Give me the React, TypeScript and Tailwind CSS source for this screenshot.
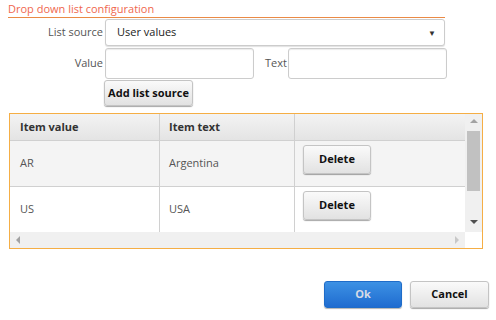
import React from 'react'

// Drop down list configuration dialog
const ROWS = [
  { value: 'AR', text: 'Argentina', bg: 'bg-[#f4f4f4]' },
  { value: 'US', text: 'USA', bg: 'bg-white' },
]

function GrayButton({ children, className = '' }: { children: React.ReactNode; className?: string }) {
  return (
    <button
      className={
        'flex items-center justify-center whitespace-nowrap rounded-[3px] border border-[#c4c4c4] bg-gradient-to-b from-[#fafafa] to-[#e2e2e2] text-[11px] font-bold text-[#111] shadow-[0_1px_1px_rgba(0,0,0,0.35)] ' +
        className
      }
    >
      {children}
    </button>
  )
}

export default function App() {
  return (
    <div className="relative h-[320px] w-[496px] overflow-hidden bg-white font-['Open_Sans',sans-serif]">
      {/* ── タイトル ── */}
      <div className="ml-[8px] h-[18px] w-[437px] border-b border-[#ea8a45] text-[11px] leading-[17px] text-[#f0674e]">
        Drop down list configuration
      </div>

      {/* ── フォーム ── */}
      <div className="flex h-[29px] items-center">
        <span className="w-[104px] pr-[1px] text-right text-[11px] text-[#555]">List source</span>
        <div className="ml-[1px] flex h-[27px] w-[340px] items-center justify-between rounded-[3px] border border-[#ccc] bg-white pl-[11px] pr-[8px] shadow-[0_1px_1px_rgba(0,0,0,0.12)]">
          <span className="text-[11px] text-[#222]">User values</span>
          <span className="text-[8px] leading-none text-[#333]">▼</span>
        </div>
      </div>
      <div className="flex h-[32px] items-center">
        <span className="w-[104px] pr-[1px] text-right text-[11px] text-[#555]">Value</span>
        <div className="ml-[1px] h-[31px] w-[149px] rounded-[3px] border border-[#ccc] bg-white shadow-[inset_0_1px_1px_rgba(0,0,0,0.08)]" />
        <span className="ml-[11px] w-[22px] text-[11px] text-[#555]">Text</span>
        <div className="ml-[1px] h-[31px] w-[159px] rounded-[3px] border border-[#ccc] bg-white shadow-[inset_0_1px_1px_rgba(0,0,0,0.08)]" />
      </div>
      <div className="ml-[104px] mt-[1px]">
        <GrayButton className="h-[26px] w-[89px]">Add list source</GrayButton>
      </div>

      {/* ── テーブル ── */}
      <div className="ml-[9px] mt-[7px] flex h-[136px] w-[474px] flex-col border border-[#f5ae45]">
        <div className="flex h-[118px]">
          <div className="w-[455px] overflow-hidden">
            <div className="flex h-[27px] border-b border-[#d0d0d0] bg-gradient-to-b from-[#f3f3f3] to-[#e4e4e4] text-[11px] font-bold text-[#333]">
              <div className="flex w-[150px] items-center border-r border-[#d0d0d0] pl-[10px]">Item value</div>
              <div className="flex w-[135px] items-center border-r border-[#d0d0d0] pl-[9px]">Item text</div>
              <div className="flex-1" />
            </div>
            {ROWS.map((r) => (
              <div key={r.value} className={'flex h-[46px] border-b border-[#d0d0d0] text-[11px] text-[#555] ' + r.bg}>
                <div className="flex w-[150px] items-center border-r border-[#d0d0d0] pl-[10px]">{r.value}</div>
                <div className="flex w-[135px] items-center border-r border-[#d0d0d0] pl-[9px]">{r.text}</div>
                <div className="flex-1 pl-[8px] pt-[4px]">
                  <GrayButton className="h-[29px] w-[68px]">Delete</GrayButton>
                </div>
              </div>
            ))}
          </div>
          {/* 縦スクロールバー */}
          <div className="relative flex w-[17px] flex-col items-center bg-[#f0f0f0]">
            <span className="mt-[5px] h-0 w-0 border-x-[4px] border-b-[4px] border-x-transparent border-b-[#a3a3a3]" />
            <div className="mt-[8px] h-[60px] w-[13px] bg-[#c1c1c1]" />
            <span className="mt-[29px] h-0 w-0 border-x-[4px] border-t-[4px] border-x-transparent border-t-[#505050]" />
          </div>
        </div>
        {/* 横スクロールバー */}
        <div className="flex h-[16px]">
          <div className="flex w-[455px] items-center justify-between bg-[#f0f0f0] px-[6px]">
            <span className="h-0 w-0 border-y-[4px] border-r-[4px] border-y-transparent border-r-[#a3a3a3]" />
            <span className="h-0 w-0 border-y-[4px] border-l-[4px] border-y-transparent border-l-[#c8c8c8]" />
          </div>
          <div className="flex-1 bg-white" />
        </div>
      </div>

      {/* ── フッター ── */}
      <div className="mt-[32px] flex justify-end gap-[8px] pr-[7px]">
        <button className="flex h-[27px] w-[78px] items-center justify-center rounded-[3px] border border-[#1f6cc8] bg-gradient-to-b from-[#3d91e4] to-[#1f6cd0] text-[11px] font-bold text-[#d6dbe6] shadow-[0_1px_1px_rgba(0,0,0,0.3)]">
          Ok
        </button>
        <GrayButton className="h-[27px] w-[79px]">Cancel</GrayButton>
      </div>
    </div>
  )
}
